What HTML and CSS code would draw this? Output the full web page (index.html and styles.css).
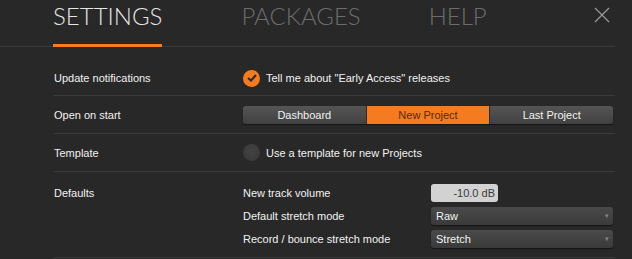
FILE: index.html
```html
<!DOCTYPE html>
<html>
<head>
	<title>Settings</title>
	<link rel="stylesheet" href="styles.css">
</head>
<body>

<div class="dialog">
	<div class="tabs">
		<a class="tab active" href="#">SETTINGS</a>
		<a class="tab pkg" href="#">PACKAGES</a>
		<a class="tab" href="#">HELP</a>
		<a class="close" href="#">
			<svg width="16" height="16" viewBox="0 0 16 16"><path d="M1 1 L15 15 M15 1 L1 15" stroke="#9a9a9a" stroke-width="1.2" fill="none"/></svg>
		</a>
	</div>

	<div class="row">
		<div class="name">Update notifications</div>
		<div class="value">
			<label class="check on">
				<span class="dot">
					<svg width="10" height="8" viewBox="0 0 10 8"><path d="M1 4 L4 6.5 L9 1" stroke="#2a2a2a" stroke-width="2" fill="none"/></svg>
				</span>
				Tell me about "Early Access" releases
			</label>
		</div>
	</div>

	<div class="row">
		<div class="name">Open on start</div>
		<div class="value">
			<div class="seg">
				<span>Dashboard</span>
				<span class="sel">New Project</span>
				<span>Last Project</span>
			</div>
		</div>
	</div>

	<div class="row">
		<div class="name">Template</div>
		<div class="value">
			<label class="check">
				<span class="dot"></span>
				Use a template for new Projects
			</label>
		</div>
	</div>

	<div class="row defaults">
		<div class="name">Defaults</div>
		<div class="value grid">
			<span>New track volume</span>
			<span><span class="num">-10.0 dB</span></span>
			<span>Default stretch mode</span>
			<span class="drop">Raw<i>&#9662;</i></span>
			<span>Record / bounce stretch mode</span>
			<span class="drop">Stretch<i>&#9662;</i></span>
		</div>
	</div>
</div>

</body>
</html>
```

FILE: styles.css
```css
body{
	margin: 0;
	background: #282828;
	font-family: "Liberation Sans", Arial, sans-serif;
	font-size: 11px;
	color: #f2f2f2;
}
.dialog{
	width: 615px;
}
.tabs{
	display: flex;
	align-items: flex-end;
	height: 46px;
	padding-left: 53px;
	border-bottom: 1px solid #3a3a3a;
}
.tab{
	font-family: Lato, sans-serif;
	font-weight: 300;
	font-size: 24px;
	color: #6c6c6c;
	text-decoration: none;
	height: 44px;
	line-height: 31px;
	border-bottom: 3px solid transparent;
	margin-bottom: -1px;
}
.tab.active{
	color: #e6e6e6;
	border-bottom-color: #f47b20;
	margin-right: 79px;
}
.tab.pkg{ margin-right: 68px; }
.close{
	margin-left: auto;
	margin-right: 5px;
	align-self: flex-start;
	margin-top: 7px;
}

.row{
	display: flex;
	align-items: center;
	margin-left: 54px;
	min-height: 37px;
	border-bottom: 1px solid #3a3a3a;
}
.row:nth-child(2){ height: 49px; padding-top: 14px; box-sizing: border-box; }
.name{
	width: 189px;
	flex: none;
}
.value{
	flex: 1;
	padding-right: 2px;
}
.check{
	display: flex;
	align-items: center;
	gap: 6px;
}
.dot{
	width: 17px;
	height: 17px;
	border-radius: 50%;
	background: radial-gradient(circle at 50% 40%, #434343, #363636);
	display: flex;
	align-items: center;
	justify-content: center;
}
.check.on .dot{
	background: #f47b20;
}
.seg{
	display: flex;
	height: 18px;
	border-radius: 3px;
	overflow: hidden;
	box-shadow: 0 1px 1px rgba(0,0,0,0.5);
}
.seg span{
	flex: 1;
	text-align: center;
	line-height: 18px;
	background: linear-gradient(#555, #414141);
	border-left: 1px solid #2c2c2c;
}
.seg span:first-child{ border-left: none; }
.seg span.sel{
	background: #f47b20;
	color: #5a2a08;
}
.defaults{
	align-items: flex-start;
	padding: 12px 0 9px;
}
.defaults .name{
	line-height: 19px;
}
.grid{
	display: grid;
	grid-template-columns: 188px 1fr;
	row-gap: 5px;
	align-items: center;
}
.num{
	display: inline-block;
	width: 67px;
	height: 18px;
	line-height: 18px;
	box-sizing: border-box;
	padding-right: 3px;
	text-align: right;
	background: #d2d2d2;
	color: #3a3a3a;
	border-radius: 3px;
	vertical-align: top;
}
.drop{
	display: flex;
	justify-content: space-between;
	height: 18px;
	line-height: 18px;
	padding: 0 4px 0 5px;
	border-radius: 3px;
	background: linear-gradient(#4a4a4a, #3a3a3a);
	box-shadow: 0 1px 1px rgba(0,0,0,0.5);
}
.drop i{
	font-style: normal;
	font-size: 7px;
	color: #888;
}
```
